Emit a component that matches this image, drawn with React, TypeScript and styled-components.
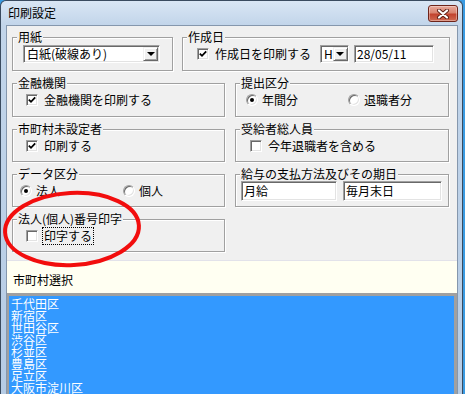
import React from 'react';
import styled, { createGlobalStyle } from 'styled-components';

const GlobalStyle = createGlobalStyle`
  html, body {
    margin: 0;
    padding: 0;
  }
  body {
    width: 465px;
    height: 394px;
    overflow: hidden;
    background: #3a9be2;
    font-family: 'Noto Sans CJK JP', 'Noto Sans', sans-serif;
    font-size: 12px;
    color: #000;
  }
`;

const cities = ['千代田区', '新宿区', '世田谷区', '渋谷区', '杉並区', '豊島区', '足立区', '大阪市淀川区'];

const CheckBox = ({ checked }: { checked?: boolean }) => (
  <SCheck>
    {checked && (
      <svg width="8" height="8" viewBox="0 0 8 8">
        <polyline points="0.8,3.6 3,5.8 7.2,1.4" fill="none" stroke="#000" strokeWidth="1.8" />
      </svg>
    )}
  </SCheck>
);

const Radio = ({ checked }: { checked?: boolean }) => <SRadio $on={!!checked} />;

const Combo = ({ w, text }: { w: number; text: string }) => (
  <SCombo $w={w}>
    <SComboText>{text}</SComboText>
    <SDropBtn />
  </SCombo>
);

export default function App() {
  return (
    <>
      <GlobalStyle />
      <SWindow>
        <STitleBar>
          <STitle>印刷設定</STitle>
          <SClose>
            <svg width="14" height="10" viewBox="0 0 14 10">
              <path d="M3 1.5 L11 8.5 M11 1.5 L3 8.5" stroke="#5a1d14" strokeWidth="4" strokeLinecap="round" />
              <path d="M3 1.5 L11 8.5 M11 1.5 L3 8.5" stroke="#fff" strokeWidth="2.2" strokeLinecap="round" />
            </svg>
          </SClose>
        </STitleBar>
        <SClient>
          <SRows>
            <SRow $gap={9}>
              <SGroup $w={161} $h={41}>
                <SLegend>用紙</SLegend>
                <SBody $pl={6}>
                  <Combo w={137} text="白紙(破線あり)" />
                </SBody>
              </SGroup>
              <SGroup $w={268} $h={41}>
                <SLegend>作成日</SLegend>
                <SBody $pl={10}>
                  <CheckBox checked />
                  <SLabel $w={105}>作成日を印刷する</SLabel>
                  <Combo w={29} text="H" />
                  <SEdit $w={80}>28/05/11</SEdit>
                </SBody>
              </SGroup>
            </SRow>
            <SRow $gap={10}>
              <SGroup $w={213} $h={41}>
                <SLegend>金融機関</SLegend>
                <SBody $pl={9}>
                  <CheckBox checked />
                  <SLabel>金融機関を印刷する</SLabel>
                </SBody>
              </SGroup>
              <SGroup $w={214} $h={41}>
                <SLegend>提出区分</SLegend>
                <SBody $pl={6}>
                  <SOption $w={102}>
                    <Radio checked />
                    <SLabel>年間分</SLabel>
                  </SOption>
                  <SOption>
                    <Radio />
                    <SLabel>退職者分</SLabel>
                  </SOption>
                </SBody>
              </SGroup>
            </SRow>
            <SRow $gap={10}>
              <SGroup $w={213} $h={40}>
                <SLegend>市町村未設定者</SLegend>
                <SBody $pl={9}>
                  <CheckBox checked />
                  <SLabel>印刷する</SLabel>
                </SBody>
              </SGroup>
              <SGroup $w={214} $h={40}>
                <SLegend>受給者総人員</SLegend>
                <SBody $pl={10}>
                  <CheckBox />
                  <SLabel>今年退職者を含める</SLabel>
                </SBody>
              </SGroup>
            </SRow>
            <SRow $gap={10}>
              <SGroup $w={213} $h={40}>
                <SLegend>データ区分</SLegend>
                <SBody $pl={3}>
                  <SOption $w={103}>
                    <Radio checked />
                    <SLabel>法人</SLabel>
                  </SOption>
                  <SOption>
                    <Radio />
                    <SLabel>個人</SLabel>
                  </SOption>
                </SBody>
              </SGroup>
              <SGroup $w={214} $h={40}>
                <SLegend>給与の支払方法及びその期日</SLegend>
                <SBody $pl={1}>
                  <SEdit $w={96} $h={20} $ml={0}>月給</SEdit>
                  <SEdit $w={99} $h={20} $ml={6}>毎月末日</SEdit>
                </SBody>
              </SGroup>
            </SRow>
            <SRow $gap={10}>
              <SGroup $w={213} $h={40}>
                <SLegend>法人(個人)番号印字</SLegend>
                <SBody $pl={9}>
                  <CheckBox />
                  <SLabel $focus>印字する</SLabel>
                </SBody>
              </SGroup>
            </SRow>
          </SRows>
          <SCaption>市町村選択</SCaption>
          <SList>
            {cities.map((c) => (
              <SItem key={c}>{c}</SItem>
            ))}
          </SList>
        </SClient>
        <SMark width="465" height="394" viewBox="0 0 465 394">
          <ellipse cx="72" cy="229" rx="67" ry="36" transform="rotate(-3 72 229)" fill="none" stroke="#f20d0d" strokeWidth="4" />
        </SMark>
      </SWindow>
    </>
  );
}

const SWindow = styled.div`
  position: relative;
  box-sizing: border-box;
  width: 463px;
  height: 394px;
  border: 1px solid #3a4b5f;
  border-bottom: none;
  border-radius: 6px 6px 0 0;
  background: linear-gradient(180deg, #d9e6f4 0px, #c2d5ea 24px, #b6cce5 100%);
  padding: 0 4px 0 5px;
  display: flex;
  flex-direction: column;
`;

const STitleBar = styled.div`
  height: 24px;
  display: flex;
  align-items: center;
  justify-content: space-between;
  padding-left: 2px;
`;

const STitle = styled.span`
  font-size: 12px;
  line-height: 14px;
`;

const SClose = styled.button`
  width: 30px;
  height: 17px;
  padding: 0;
  margin-top: 1px;
  border: 1px solid #6e241a;
  border-radius: 3px;
  background: linear-gradient(180deg, #e8a99b 0%, #d98470 45%, #c2432e 55%, #cf6a52 100%);
  box-shadow: inset 0 0 0 1px rgba(255, 255, 255, 0.35);
  display: flex;
  align-items: center;
  justify-content: center;
`;

const SClient = styled.div`
  flex: 1;
  min-height: 0;
  border: 1px solid #8597ad;
  border-bottom: none;
  background: #f0f0f0;
  display: flex;
  flex-direction: column;
  padding-top: 4px;
`;

const SRows = styled.div`
  display: flex;
  flex-direction: column;
  gap: 5px;
  padding-left: 5px;
`;

const SRow = styled.div<{ $gap: number }>`
  display: flex;
  gap: ${(p) => p.$gap}px;
`;

const SGroup = styled.fieldset<{ $w: number; $h: number }>`
  box-sizing: border-box;
  width: ${(p) => p.$w}px;
  height: ${(p) => p.$h}px;
  min-width: 0;
  margin: 0;
  padding: 0 0 0 4px;
  border: 1px solid #a0a0a0;
  box-shadow: 1px 1px 0 #fff, inset 1px 1px 0 #fff;
`;

const SLegend = styled.legend`
  padding: 0 1px;
  font-size: 12px;
  line-height: 14px;
  background: #f0f0f0;
`;

const SBody = styled.div<{ $pl: number }>`
  height: 20px;
  display: flex;
  align-items: center;
  padding-left: ${(p) => p.$pl}px;
`;

const SCheck = styled.span`
  box-sizing: border-box;
  flex: none;
  width: 12px;
  height: 12px;
  background: #fff;
  border: 1px solid;
  border-color: #a0a0a0 #fff #fff #a0a0a0;
  box-shadow: inset 1px 1px 0 #696969, inset -1px -1px 0 #e3e3e3;
  display: flex;
  align-items: center;
  justify-content: center;
  margin-right: 6px;
`;

const SRadio = styled.span<{ $on: boolean }>`
  box-sizing: border-box;
  flex: none;
  width: 12px;
  height: 12px;
  border-radius: 50%;
  background: #fff;
  border: 1px solid;
  border-color: #a0a0a0 #fff #fff #a0a0a0;
  box-shadow: inset 1px 1px 0 #696969, inset -1px -1px 0 #e3e3e3;
  display: flex;
  align-items: center;
  justify-content: center;
  margin-right: 4px;
  &::after {
    content: '';
    width: 4px;
    height: 4px;
    border-radius: 50%;
    background: ${(p) => (p.$on ? '#000' : 'transparent')};
  }
`;

const SLabel = styled.span<{ $w?: number; $focus?: boolean }>`
  flex: none;
  line-height: 14px;
  white-space: nowrap;
  width: ${(p) => (p.$w ? `${p.$w}px` : 'auto')};
  outline: ${(p) => (p.$focus ? '1px dotted #000' : 'none')};
  outline-offset: 1px;
`;

const SOption = styled.span<{ $w?: number }>`
  display: flex;
  align-items: center;
  width: ${(p) => (p.$w ? `${p.$w}px` : 'auto')};
`;

const SCombo = styled.div<{ $w: number }>`
  box-sizing: border-box;
  flex: none;
  width: ${(p) => p.$w}px;
  height: 18px;
  display: flex;
  align-items: center;
  background: #fff;
  border: 1px solid;
  border-color: #a0a0a0 #fff #fff #a0a0a0;
  box-shadow: inset 1px 1px 0 #696969, inset -1px -1px 0 #e3e3e3;
  padding: 0 1px 0 3px;
`;

const SComboText = styled.span`
  flex: 1;
  line-height: 14px;
  white-space: nowrap;
`;

const SDropBtn = styled.span`
  box-sizing: border-box;
  flex: none;
  width: 15px;
  height: 14px;
  background: #f0f0f0;
  border: 1px solid;
  border-color: #f0f0f0 #696969 #696969 #f0f0f0;
  box-shadow: inset 1px 1px 0 #fff, inset -1px -1px 0 #a0a0a0;
  display: flex;
  align-items: center;
  justify-content: center;
  &::after {
    content: '';
    border-left: 4px solid transparent;
    border-right: 4px solid transparent;
    border-top: 4px solid #000;
  }
`;

const SEdit = styled.div<{ $w: number; $h?: number; $ml?: number }>`
  box-sizing: border-box;
  flex: none;
  width: ${(p) => p.$w}px;
  height: ${(p) => p.$h ?? 18}px;
  margin-left: ${(p) => p.$ml ?? 5}px;
  background: #fff;
  border: 1px solid;
  border-color: #a0a0a0 #fff #fff #a0a0a0;
  box-shadow: inset 1px 1px 0 #696969, inset -1px -1px 0 #e3e3e3;
  padding: 0 2px;
  display: flex;
  align-items: center;
  line-height: 14px;
  white-space: nowrap;
`;

const SCaption = styled.div`
  margin-top: 8px;
  height: 33px;
  box-sizing: border-box;
  background: #fffff2;
  border-top: 1px solid #e2e2ea;
  padding: 12px 0 0 6px;
  font-size: 12px;
  line-height: 14px;
`;

const SList = styled.div`
  flex: 1;
  min-height: 0;
  overflow: hidden;
  background: #3399ff;
  border-style: solid;
  border-color: #a0a0a0;
  border-width: 3px 3px 0 2px;
  padding: 2px 0 0 2px;
`;

const SItem = styled.div`
  color: #fff;
  font-size: 12px;
  line-height: 12px;
  white-space: nowrap;
`;

const SMark = styled.svg`
  position: absolute;
  left: -1px;
  top: -1px;
  pointer-events: none;
`;
